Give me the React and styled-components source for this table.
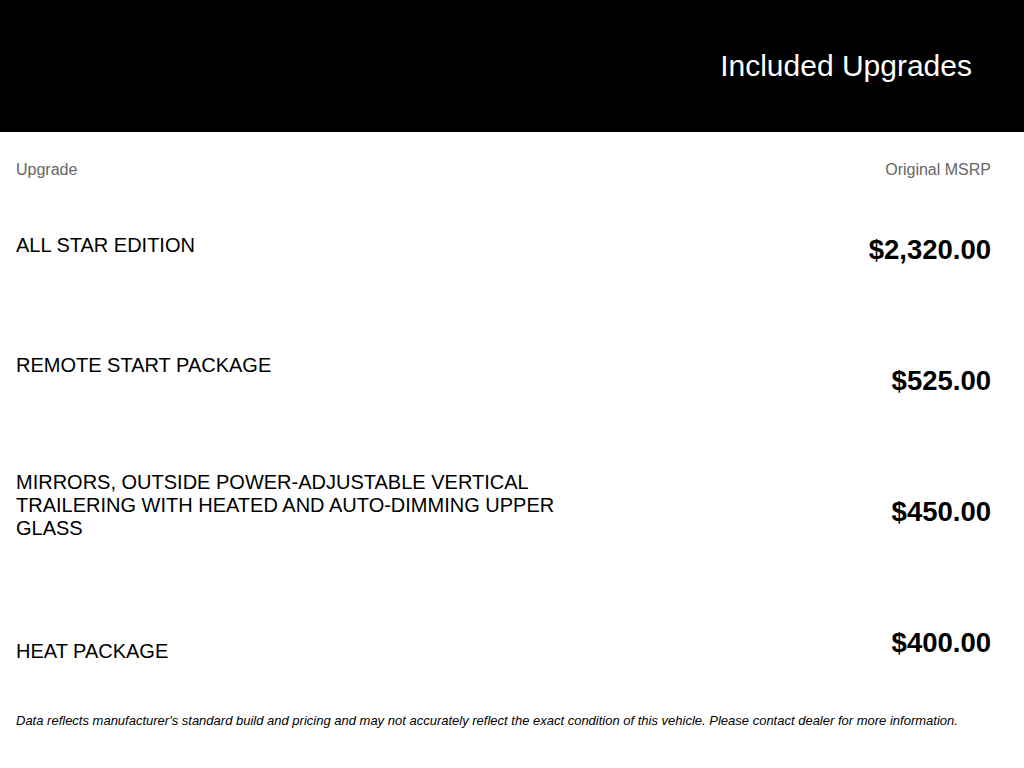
import React from "react";
import styled, { createGlobalStyle } from "styled-components";

const GlobalStyle = createGlobalStyle`
  body {
    margin: 0;
    background: #fff;
    font-family: "Liberation Sans", Arial, sans-serif;
  }
`;

const Page = styled.div`
  width: 1024px;
`;

const Banner = styled.header`
  height: 132px;
  background: #000;
  display: flex;
  align-items: center;
  justify-content: flex-end;
  padding-right: 52px;
  box-sizing: border-box;
`;

const Title = styled.h1`
  margin: 0;
  color: #fff;
  font-size: 30px;
  font-weight: 400;
`;

const Table = styled.section`
  padding: 0 33px 0 16px;
`;

const HeadRow = styled.div`
  display: flex;
  justify-content: space-between;
  align-items: center;
  height: 53px;
  padding-top: 22px;
  box-sizing: border-box;
  font-size: 16px;
  color: #666;
`;

const Row = styled.div`
  display: flex;
  justify-content: space-between;
  align-items: center;
  height: 130.8px;
`;

const Name = styled.div`
  width: 560px;
  font-size: 20px;
  line-height: 23px;
  color: #000;
  padding-top: ${(p) => (p.shift > 0 ? p.shift * 2 : 0)}px;
  padding-bottom: ${(p) => (p.shift < 0 ? -p.shift * 2 : 0)}px;
`;

const Price = styled.div`
  font-size: 27.5px;
  font-weight: 700;
  color: #000;
`;

const Note = styled.p`
  margin: 5px 0 0;
  padding: 0 16px;
  font-size: 13px;
  font-style: italic;
  color: #000;
`;

const upgrades = [
  { name: "ALL STAR EDITION", price: "$2,320.00", shift: -5 },
  { name: "REMOTE START PACKAGE", price: "$525.00", shift: -16 },
  {
    name: "MIRRORS, OUTSIDE POWER-ADJUSTABLE VERTICAL TRAILERING WITH HEATED AND AUTO-DIMMING UPPER GLASS",
    price: "$450.00",
    shift: -6,
  },
  { name: "HEAT PACKAGE", price: "$400.00", shift: 9 },
];

export default function App() {
  return (
    <Page>
      <GlobalStyle />
      <Banner>
        <Title>Included Upgrades</Title>
      </Banner>
      <Table>
        <HeadRow>
          <span>Upgrade</span>
          <span>Original MSRP</span>
        </HeadRow>
        {upgrades.map((u, i) => (
          <Row key={i}>
            <Name shift={u.shift}>{u.name}</Name>
            <Price>{u.price}</Price>
          </Row>
        ))}
      </Table>
      <Note>
        Data reflects manufacturer's standard build and pricing and may not
        accurately reflect the exact condition of this vehicle. Please contact
        dealer for more information.
      </Note>
    </Page>
  );
}
